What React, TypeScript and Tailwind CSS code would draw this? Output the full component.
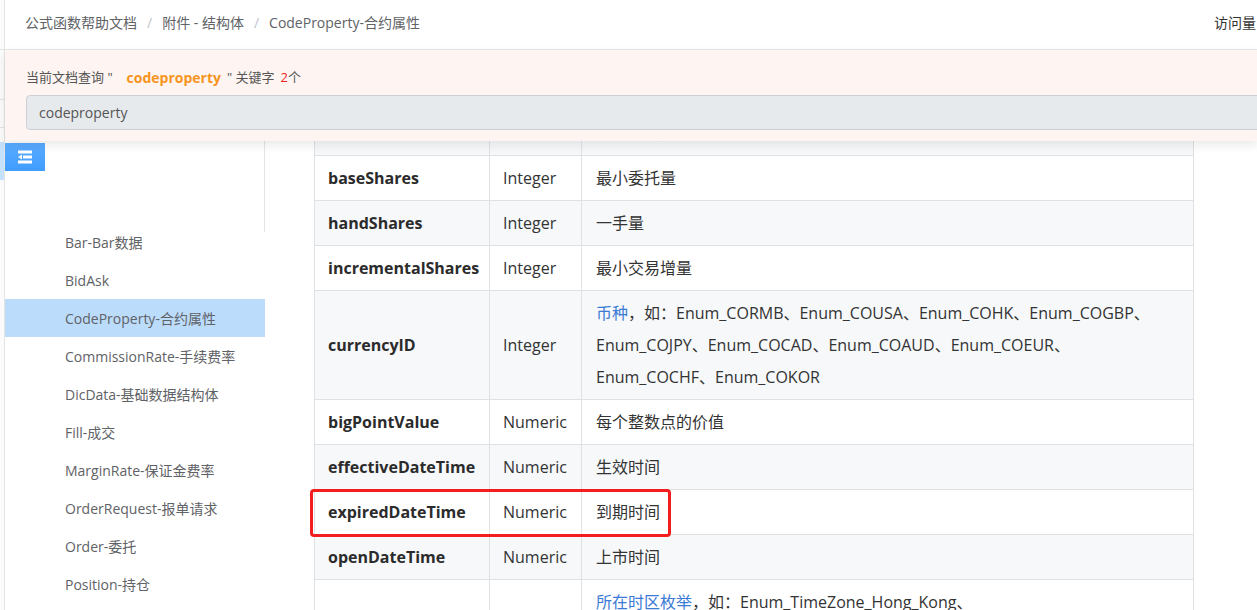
import type { ReactNode } from "react";

type Row = { name: string; type: string; desc: ReactNode; mark?: boolean };

const rows: Row[] = [
  {
    name: "contractUnit",
    type: "Integer",
    desc: "合约单位，即每手合约对应的标的数量，用于计算合约价值、保证金以及手续费等相关数值，不同品种的合约单位各不相同",
  },
  { name: "baseShares", type: "Integer", desc: "最小委托量" },
  { name: "handShares", type: "Integer", desc: "一手量" },
  { name: "incrementalShares", type: "Integer", desc: "最小交易增量" },
  {
    name: "currencyID",
    type: "Integer",
    desc: (
      <>
        <a className="text-[#3b7bd6]">币种</a>，如：Enum_CORMB、Enum_COUSA、Enum_COHK、Enum_COGBP、Enum_COJPY、Enum_COCAD、Enum_COAUD、Enum_COEUR、Enum_COCHF、Enum_COKOR
      </>
    ),
  },
  { name: "bigPointValue", type: "Numeric", desc: "每个整数点的价值" },
  { name: "effectiveDateTime", type: "Numeric", desc: "生效时间" },
  { name: "expiredDateTime", type: "Numeric", desc: "到期时间", mark: true },
  { name: "openDateTime", type: "Numeric", desc: "上市时间" },
  {
    name: "timeZone",
    type: "Integer",
    desc: (
      <>
        <a className="text-[#3b7bd6]">所在时区枚举</a>，如：Enum_TimeZone_Hong_Kong、Enum_TimeZone_New_York、Enum_TimeZone_London、Enum_TimeZone_Shanghai、Enum_TimeZone_Tokyo、Enum_TimeZone_Singapore
      </>
    ),
  },
];

const menu = [
  "Bar-Bar数据",
  "BidAsk",
  "CodeProperty-合约属性",
  "CommissionRate-手续费率",
  "DicData-基础数据结构体",
  "Fill-成交",
  "MarginRate-保证金费率",
  "OrderRequest-报单请求",
  "Order-委托",
  "Position-持仓",
  "QuoteData-行情数据",
];

function FoldIcon() {
  return (
    <svg width="14" height="14" viewBox="0 0 14 14" fill="#fff">
      <rect x="0" y="0.5" width="14" height="3" />
      <polygon points="0,7 4,4.5 4,9.5" />
      <rect x="5" y="5.5" width="9" height="3" />
      <rect x="0" y="10.5" width="14" height="3" />
    </svg>
  );
}

export default function App() {
  return (
    <div
      className="relative flex h-[610px] w-full overflow-hidden bg-white text-[#333]"
      style={{ fontFamily: '"Open Sans", "Noto Sans CJK SC", sans-serif' }}
    >
      {/* page behind the panel */}
      <div className="flex w-[5px] shrink-0 flex-col border-r border-[#e4e4e4] bg-[#fbfbfb]">
        <div className="h-[50px] shrink-0 border-b border-[#e4e4e4]" />
        <div className="h-[50px] shrink-0 border-b border-[#e4e4e4]" />
        <div className="h-[28px] shrink-0 border-b border-[#e4e4e4]" />
        <div className="h-[14px] shrink-0" />
        <div className="h-[38px] shrink-0 bg-[#c6e1fc]" />
      </div>

      <div className="relative flex min-w-0 flex-1 flex-col">
        {/* header */}
        <div className="flex h-[50px] shrink-0 items-center border-b border-[#e6e6e6] pb-[4px] pl-[20px] text-[14px] text-[#606266]">
          <span>公式函数帮助文档</span>
          <span className="mx-[10px] text-[#c0c4cc]">/</span>
          <span>附件 - 结构体</span>
          <span className="mx-[10px] text-[#c0c4cc]">/</span>
          <span>CodeProperty-合约属性</span>
          <span className="ml-auto mr-[-45px] shrink-0 whitespace-nowrap text-[#333]">访问量：1024</span>
        </div>

        {/* search overlay */}
        <div className="absolute left-0 right-0 top-[50px] z-20 flex h-[91px] flex-col overflow-hidden bg-[#fef5f2] pl-[21px] shadow-[0_4px_10px_rgba(0,0,0,0.09)]">
          <div className="mt-[17px] flex items-center text-[13px] text-[#555]">
            <span>当前文档查询 "</span>
            <span className="ml-[14px] mr-[6px] text-[14px] font-bold text-[#f7941e]">codeproperty</span>
            <span>" 关键字</span>
            <span className="ml-[6px] text-[#f01e1e]">2</span>
            <span>个</span>
          </div>
          <div className="mr-[-20px] mt-[7px] flex h-[35px] shrink-0 items-center rounded-[4px] border border-[#cdd0d6] bg-[#e7eaed] pl-[12px] text-[14px] text-[#555]">
            codeproperty
          </div>
        </div>

        <div className="flex min-h-0 flex-1">
          {/* sidebar */}
          <div className="flex w-[260px] shrink-0 flex-col">
            <div className="-mb-[9px] h-[182px] shrink-0 border-r border-[#e4e4e4] pt-[93px]">
              <div className="flex h-[28px] w-[40px] items-center justify-center bg-gradient-to-b from-[#5aabff] to-[#3f9dff]">
                <FoldIcon />
              </div>
            </div>
            <ul className="shrink-0 text-[14px] text-[#5f6266]">
              {menu.map((m) => (
                <li
                  key={m}
                  className={
                    m.startsWith("CodeProperty")
                      ? "flex h-[38px] items-center bg-[#bcdcfc] pl-[60px]"
                      : "flex h-[38px] items-center pl-[60px]"
                  }
                >
                  {m}
                </li>
              ))}
            </ul>
          </div>

          {/* content */}
          <div className="min-w-0 flex-1 pl-[49px] pt-[28px]">
            <table className="w-[880px] table-fixed border-collapse text-[16px] leading-[32px]">
              <colgroup>
                <col className="w-[175px]" />
                <col className="w-[92px]" />
                <col />
              </colgroup>
              <tbody>
                {rows.map((r, i) => (
                  <tr key={r.name} className={i % 2 === 0 ? "bg-[#f6f8fa]" : "bg-white"}>
                    <td className="relative border border-[#dfe2e5] px-[13px] py-[6px] font-bold text-[#2b2b2b]">
                      {r.name}
                      {r.mark && (
                        <span className="pointer-events-none absolute left-[-5px] top-[-1px] h-[48px] w-[361px] rounded-[4px] border-[3px] border-[#f31d1d]" />
                      )}
                    </td>
                    <td className="border border-[#dfe2e5] px-[13px] py-[6px] text-[#333]">{r.type}</td>
                    <td className="border border-[#dfe2e5] px-[14px] py-[6px] text-[#333]">{r.desc}</td>
                  </tr>
                ))}
              </tbody>
            </table>
          </div>
        </div>
      </div>
    </div>
  );
}
